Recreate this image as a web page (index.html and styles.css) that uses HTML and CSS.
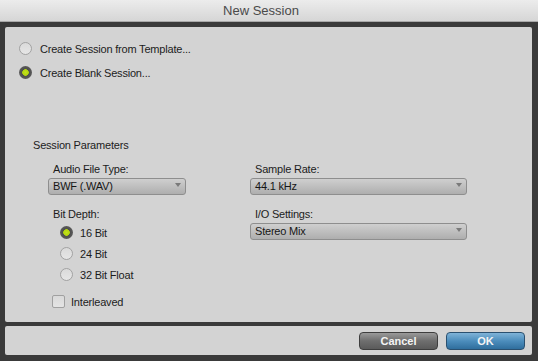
FILE: index.html
```html
<!DOCTYPE html>
<html>
<head>
<meta charset="utf-8">
<title>New Session</title>
<link rel="stylesheet" href="styles.css">
</head>
<body>
<div class="window">
  <div class="titlebar">New Session</div>
  <div class="main">
    <div class="choice">
      <span class="radio"></span>
      <span class="label">Create Session from Template...</span>
    </div>
    <div class="choice">
      <span class="radio on"></span>
      <span class="label">Create Blank Session...</span>
    </div>
    <div class="section-title">Session Parameters</div>
    <div class="params">
      <div class="col col-left">
        <div class="field-label">Audio File Type:</div>
        <div class="select narrow"><span>BWF (.WAV)</span><i class="arrow"></i></div>
        <div class="field-label second">Bit Depth:</div>
        <div class="radios">
          <div class="choice small"><span class="radio on"></span><span class="label">16 Bit</span></div>
          <div class="choice small"><span class="radio"></span><span class="label">24 Bit</span></div>
          <div class="choice small"><span class="radio"></span><span class="label">32 Bit Float</span></div>
        </div>
        <div class="check-row"><span class="checkbox"></span><span class="label">Interleaved</span></div>
      </div>
      <div class="col col-right">
        <div class="field-label">Sample Rate:</div>
        <div class="select wide"><span>44.1 kHz</span><i class="arrow"></i></div>
        <div class="field-label second">I/O Settings:</div>
        <div class="select wide"><span>Stereo Mix</span><i class="arrow"></i></div>
      </div>
    </div>
  </div>
  <div class="footer">
    <button class="btn cancel">Cancel</button>
    <button class="btn ok">OK</button>
  </div>
</div>
</body>
</html>
```
FILE: styles.css
```css
html, body {
  margin: 0;
  padding: 0;
}
body {
  width: 538px;
  height: 361px;
  background: #3a3a3a;
  font-family: "Liberation Sans", Arial, sans-serif;
  font-size: 11px;
  letter-spacing: -0.2px;
  color: #1c1c1c;
  overflow: hidden;
}
.window {
  display: flex;
  flex-direction: column;
}
.titlebar {
  height: 21px;
  line-height: 22px;
  text-align: center;
  font-size: 13px;
  letter-spacing: 0;
  color: #4a4a4a;
  background: linear-gradient(#ececec, #d6d6d6);
  border-bottom: 1px solid #a9a9a9;
  padding-right: 16px;
}
.main {
  margin: 5px 6px 0 5px;
  height: 295px;
  box-sizing: border-box;
  background: #d3d3d3;
  border-radius: 2px;
  padding: 15px 0 0 14px;
}
.choice {
  display: flex;
  align-items: center;
  height: 13px;
  gap: 8px;
  margin-bottom: 11px;
}
.radio {
  width: 13px;
  height: 13px;
  box-sizing: border-box;
  border-radius: 50%;
  border: 1px solid #a2a2a2;
  background: linear-gradient(#dadada, #e6e6e6);
  flex: none;
}
.radio.on {
  border: none;
  background: radial-gradient(circle, #c4e21a 0, #b2d40e 3px, #4e4e4e 3.6px, #5a5a5a 6.5px);
}
.label {
  line-height: 14px;
  white-space: nowrap;
}
.section-title {
  margin: 59px 0 0 14px;
  line-height: 14px;
}
.params {
  display: grid;
  grid-template-columns: 202px 217px;
  margin: 10px 0 0 29px;
}
.field-label {
  line-height: 14px;
  padding-left: 5px;
  margin-bottom: 2px;
}
.field-label.second {
  margin-top: 12px;
}
.select {
  height: 17px;
  box-sizing: border-box;
  border: 1px solid #8e8e8e;
  border-radius: 3px;
  background: linear-gradient(#cfcfcf, #bdbdbd 55%, #aeaeae);
  display: flex;
  align-items: center;
  justify-content: space-between;
  padding: 0 4px 0 4px;
  color: #161616;
}
.select span {
  line-height: 15px;
}
.select.narrow { width: 138px; }
.select.wide { width: 217px; }
.arrow {
  width: 0;
  height: 0;
  border-left: 3.5px solid transparent;
  border-right: 3.5px solid transparent;
  border-top: 4px solid #7a7a7a;
  margin-top: -3px;
}
.radios {
  display: flex;
  flex-direction: column;
  gap: 8px;
  margin: 5px 0 0 12px;
}
.radios .choice {
  margin-bottom: 0;
  gap: 7px;
}
.check-row {
  display: flex;
  align-items: center;
  gap: 6px;
  margin: 14px 0 0 4px;
  height: 13px;
}
.checkbox {
  width: 13px;
  height: 13px;
  box-sizing: border-box;
  border: 1px solid #a0a0a0;
  border-radius: 2px;
  background: linear-gradient(#d9d9d9, #e4e4e4);
}
.footer {
  margin: 4px 6px 0 5px;
  height: 29px;
  background: #d3d3d3;
  border-radius: 2px;
  display: flex;
  justify-content: flex-end;
  align-items: center;
  gap: 8px;
  padding-right: 7px;
}
.btn {
  width: 79px;
  height: 18px;
  margin-top: 1px;
  box-sizing: border-box;
  border-radius: 4px;
  font-family: "Liberation Sans", Arial, sans-serif;
  font-size: 11px;
  font-weight: bold;
  color: #f4f4f4;
  padding: 0;
  line-height: 16px;
}
.cancel {
  border: 1px solid #3e3e3e;
  background: linear-gradient(#9a9a9a, #6e6e6e 50%, #5a5a5a);
}
.ok {
  border: 1px solid #2a5070;
  background: linear-gradient(#7fb3d8, #4c8dbc 50%, #2f6e9d);
}
```
